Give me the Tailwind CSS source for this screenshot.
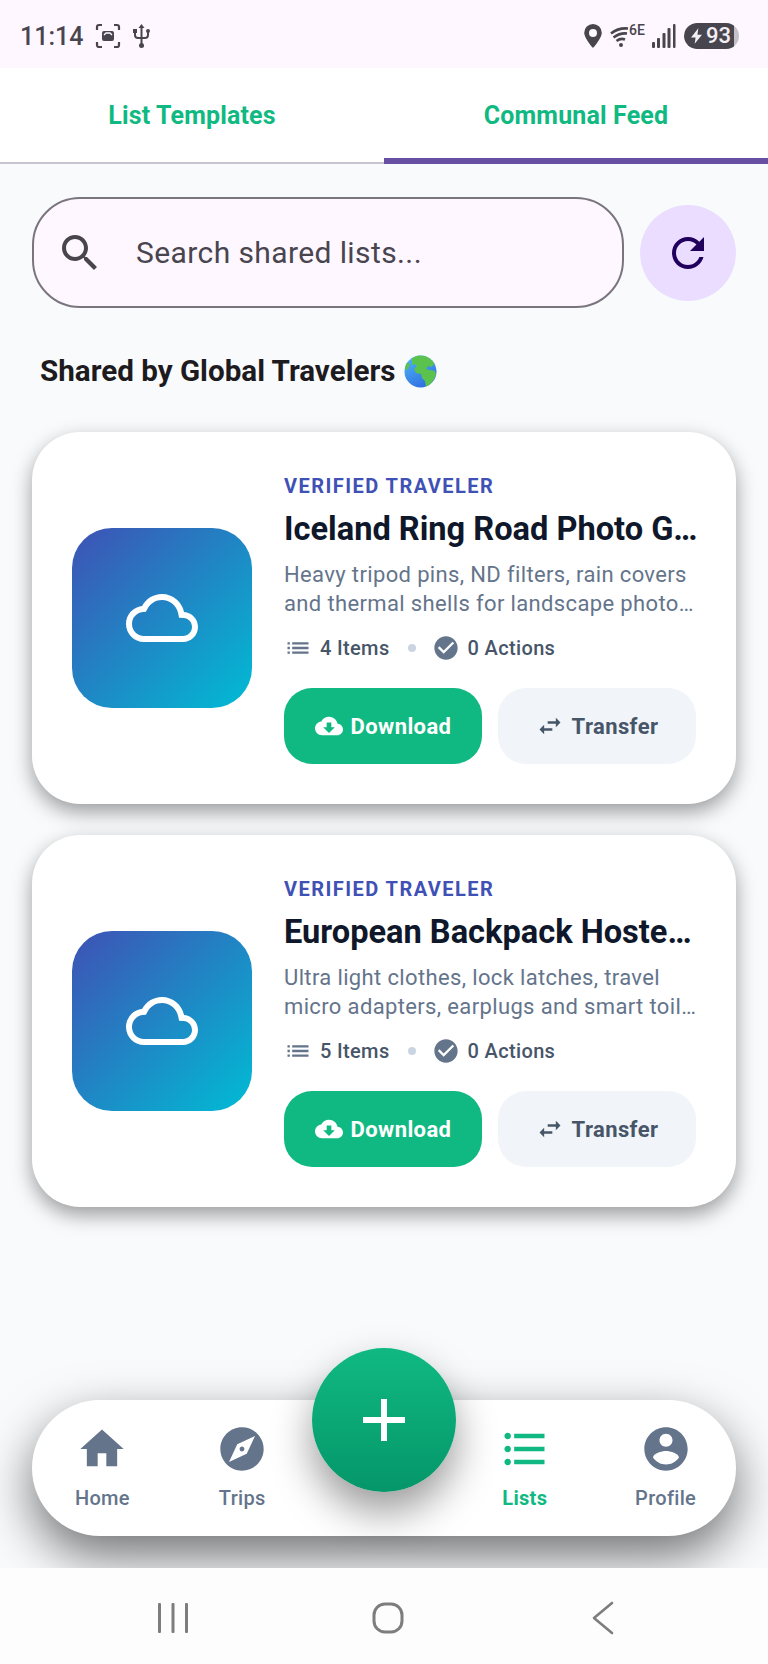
<!DOCTYPE html>
<html lang="en">
<head>
<meta charset="UTF-8">
<meta name="viewport" content="width=device-width, initial-scale=1.0">
<title>Communal Feed</title>
<script src="https://cdn.jsdelivr.net/npm/@tailwindcss/browser@4"></script>
</head>
<body class="bg-white">
<div class="w-[768px] h-[1664px] flex flex-col overflow-hidden font-['Roboto',sans-serif]">

    <!-- Status bar -->
    <div class="h-[68px] shrink-0 bg-[#fef7ff] flex items-center justify-between pl-[20px] pr-[29px] pt-[4px] text-[#49454f]">
        <div class="flex items-center">
            <span class="text-[25px] font-medium leading-none">11:14</span>
            <svg class="ml-[12px]" width="26" height="26" viewBox="0 0 26 26" fill="none" stroke="#49454f" stroke-width="2.200"><path d="M2 7V4a2 2 0 0 1 2-2h3M19 2h3a2 2 0 0 1 2 2v3M24 19v3a2 2 0 0 1-2 2h-3M7 24H4a2 2 0 0 1-2-2v-3"/><rect x="7" y="8" width="12" height="10" rx="2" fill="#49454f" stroke="none"/><path d="M9 12l2-2h4l2 2" stroke="#fef7ff" stroke-width="1.300"/></svg>
            <svg class="ml-[12px]" width="17" height="25" viewBox="0 0 17 25" fill="none" stroke="#49454f" stroke-width="2"><path d="M8.500 2v19M2 8v3c0 2 1 3 3 3h7c2 0 3-1 3-3V8"/><circle cx="8.500" cy="21.500" r="2.500" fill="#49454f" stroke="none"/><path d="M8.500 0l3 4h-6z" fill="#49454f" stroke="none"/><rect x="0" y="5" width="4" height="4" fill="#49454f" stroke="none"/><circle cx="15" cy="7" r="2" fill="#49454f" stroke="none"/></svg>
        </div>
        <div class="flex items-center">
            <svg width="18" height="24" viewBox="0 0 18 24"><path fill-rule="evenodd" fill="#49454f" d="M9 0a8.800 8.800 0 0 1 8.800 8.800C17.800 14.500 9 24 9 24S.2 14.500.2 8.800A8.800 8.800 0 0 1 9 0zm0 5a4 4 0 1 0 0 8 4 4 0 0 0 0-8z"/></svg>
            <div class="relative ml-[8px] w-[36px] h-[24px]">
                <svg width="20" height="22" viewBox="0 0 20 22" fill="none" stroke="#49454f" stroke-width="2.600" class="absolute left-0 top-[2px]"><path d="M1 7.500C6 3.500 12 2 18 2.500M3.500 11.500C8 8 12 7 17 7.500M6.500 15c2.500-2 6-2.500 8.500-1.500"/><circle cx="11" cy="19" r="2" fill="#49454f" stroke="none"/></svg>
                <span class="absolute left-[19px] top-[-1px] text-[14px] font-medium leading-none">6E</span>
            </div>
            <svg class="ml-[6px]" width="24" height="24" viewBox="0 0 24 24" fill="#49454f"><rect x="0" y="18" width="3" height="6" rx="1"/><rect x="5" y="14" width="3" height="10" rx="1"/><rect x="10.500" y="9" width="3" height="15" rx="1"/><rect x="15.500" y="4" width="3" height="20" rx="1"/><rect x="21" y="0" width="2.500" height="24" rx="1"/></svg>
            <div class="ml-[8px] h-[26px] w-[55px] rounded-full bg-[#c4c1c6] overflow-hidden">
                <div class="h-full w-[50px] rounded-l-full bg-[#49454f] flex items-center pl-[7px] text-[#f4eff4]">
                    <svg width="11" height="16" viewBox="0 0 12 17" fill="#f4eff4"><path d="M8 0L0 10h5l-1 7 8-10H7z"/></svg>
                    <span class="ml-[4px] text-[22px] font-medium leading-none">93</span>
                </div>
            </div>
        </div>
    </div>

    <!-- Tabs -->
    <div class="h-[96px] shrink-0 bg-white grid grid-cols-2 relative border-b-2 border-[#cac4d0]">
        <div class="flex items-center justify-center pt-[2px] text-[25px] tracking-[0.15px] font-bold text-[#10b981]">List Templates</div>
        <div class="flex items-center justify-center pt-[2px] text-[25px] tracking-[0.15px] font-bold text-[#10b981]">Communal Feed</div>
        <div class="absolute right-0 bottom-[-2px] w-[384px] h-[6px] bg-[#6750a4]"></div>
    </div>

    <!-- Feed -->
    <div class="flex-1 relative overflow-hidden bg-[#f8fafc] px-[32px] pt-[33px]">
        <div class="flex items-center gap-[16px]">
            <div class="flex-1 h-[111px] rounded-[48px] border-2 border-[#79747e] bg-[#fef7ff] flex items-center pl-[22px]">
                <svg width="48" height="48" viewBox="0 0 24 24" fill="#49454f"><path d="M15.500 14h-.79l-.28-.27C15.410 12.590 16 11.110 16 9.500 16 5.910 13.090 3 9.500 3S3 5.910 3 9.500 5.910 16 9.500 16c1.610 0 3.090-.59 4.230-1.570l.27.28v.79l5 4.990L20.490 19l-4.990-5zm-6 0C7.010 14 5 11.990 5 9.500S7.010 5 9.500 5 14 7.010 14 9.500 11.990 14 9.500 14z"/></svg>
                <span class="ml-[32px] text-[30px] tracking-[0.4px] text-[#49454f]">Search shared lists...</span>
            </div>
            <div class="w-[96px] h-[96px] rounded-full bg-[#eaddff] flex items-center justify-center">
                <svg width="48" height="48" viewBox="0 0 24 24" fill="#21005d"><path d="M17.650 6.350C16.200 4.900 14.210 4 12 4c-4.420 0-7.990 3.580-7.990 8s3.570 8 7.990 8c3.730 0 6.840-2.550 7.730-6h-2.080c-.82 2.330-3.040 4-5.650 4-3.310 0-6-2.690-6-6s2.690-6 6-6c1.660 0 3.140.69 4.220 1.780L13 11h7V4l-2.350 2.350z"/></svg>
            </div>
        </div>

        <div class="mt-[45px] ml-[8px] flex items-center h-[36px]">
            <span class="text-[29.6px] font-bold text-[#1d1b20]">Shared by Global Travelers</span>
            <svg class="ml-[8px]" width="33" height="33" viewBox="0 0 33 33">
                <defs>
                    <linearGradient id="sea" x1="0.2" y1="0" x2="0.7" y2="1"><stop offset="0" stop-color="#4db5f5"/><stop offset="1" stop-color="#2f6ce0"/></linearGradient>
                    <clipPath id="ball"><circle cx="16.500" cy="16.500" r="16"/></clipPath>
                </defs>
                <circle cx="16.500" cy="16.500" r="16" fill="url(#sea)"/>
                <g clip-path="url(#ball)" fill="#5cc24e">
                    <path d="M8 3l6-3 12 1 5 6-3 5-4-1-2 3 4 1 5 1 1 4-3 6-4 5-3 1-1-6-3-3-1-4-5-1-2-4 3-3-2-2-3 1z"/>
                    <path d="M0 9l4-2 2 3-3 5-3-1z"/>
                </g>
            </svg>
        </div>

        <div class="mt-[43px] flex flex-col gap-[31px]">
            <!-- Card 1 -->
            <div class="h-[372px] rounded-[48px] bg-white shadow-[0_8px_20px_rgba(0,0,0,0.38)] flex items-center pl-[40px] pr-[40px] gap-[32px]">
                <div class="w-[180px] h-[180px] shrink-0 rounded-[40px] bg-linear-to-br/srgb from-[#3f51b5] to-[#00bcd4] flex items-center justify-center">
                    <svg width="72" height="72" viewBox="0 0 24 24" fill="#fff"><path d="M19.350 10.040C18.670 6.590 15.640 4 12 4 9.110 4 6.600 5.640 5.350 8.040 2.340 8.360 0 10.910 0 14c0 3.310 2.690 6 6 6h13c2.760 0 5-2.240 5-5 0-2.640-2.050-4.780-4.650-4.960zM19 18H6c-2.210 0-4-1.790-4-4 0-2.050 1.530-3.760 3.560-3.970l1.070-.11.5-.95C8.080 7.140 9.940 6 12 6c2.620 0 4.880 1.860 5.390 4.430l.3 1.500 1.530.11c1.560.1 2.780 1.410 2.780 2.960 0 1.650-1.350 3-3 3z"/></svg>
                </div>
                <div class="flex-1 min-w-0">
                    <div class="text-[20px] leading-[28px] font-bold tracking-[1.45px] text-[#3f51b5]">VERIFIED TRAVELER</div>
                    <div class="mt-[9px] text-[32.6px] leading-[40px] font-bold text-[#0f172a] whitespace-nowrap">Iceland Ring Road Photo G…</div>
                    <div class="mt-[11px] text-[22px] leading-[29px] tracking-[0.36px] text-[#64748b] whitespace-nowrap">
                        <div>Heavy tripod pins, ND filters, rain covers</div>
                        <div>and thermal shells for landscape photo…</div>
                    </div>
                    <div class="mt-[16px] h-[28px] flex items-center text-[20px] font-medium tracking-[0.35px] text-[#475569]">
                        <svg width="28" height="28" viewBox="0 0 24 24" fill="#64748b"><path d="M3 13h2v-2H3v2zm0 4h2v-2H3v2zm0-8h2V7H3v2zm4 4h14v-2H7v2zm0 4h14v-2H7v2zM7 7v2h14V7H7z"/></svg>
                        <span class="ml-[8px]">4 Items</span>
                        <span class="ml-[18px] mr-[16px] w-[8px] h-[8px] rounded-full bg-[#cbd5e1]"></span>
                        <svg width="28" height="28" viewBox="0 0 24 24" fill="#64748b"><path d="M12 2C6.480 2 2 6.480 2 12s4.480 10 10 10 10-4.480 10-10S17.520 2 12 2zm-2 15l-5-5 1.410-1.410L10 14.170l7.590-7.590L19 8l-9 9z"/></svg>
                        <span class="ml-[8px]">0 Actions</span>
                    </div>
                    <div class="mt-[26px] grid grid-cols-2 gap-[16px]">
                        <div class="h-[76px] rounded-[28px] bg-[#10b981] text-white flex items-center justify-center gap-[8px] text-[22px] font-bold tracking-[0.4px]">
                            <svg width="28" height="28" viewBox="0 0 24 24" fill="#fff"><path d="M19.350 10.040C18.670 6.590 15.640 4 12 4 9.110 4 6.600 5.640 5.350 8.040 2.340 8.360 0 10.910 0 14c0 3.310 2.690 6 6 6h13c2.760 0 5-2.240 5-5 0-2.640-2.050-4.780-4.650-4.960zM17 13l-5 5-5-5h3V9h4v4h3z"/></svg>
                            Download
                        </div>
                        <div class="h-[76px] rounded-[28px] bg-[#f1f5f9] text-[#475569] flex items-center justify-center gap-[8px] text-[22px] font-bold tracking-[0.4px]">
                            <svg width="28" height="28" viewBox="0 0 24 24" fill="#475569"><path d="M6.990 11L3 15l3.990 4v-3H14v-2H6.990v-3zM21 9l-3.990-4v3H10v2h7.010v3L21 9z"/></svg>
                            Transfer
                        </div>
                    </div>
                </div>
            </div>

            <!-- Card 2 -->
            <div class="h-[372px] rounded-[48px] bg-white shadow-[0_8px_20px_rgba(0,0,0,0.38)] flex items-center pl-[40px] pr-[40px] gap-[32px]">
                <div class="w-[180px] h-[180px] shrink-0 rounded-[40px] bg-linear-to-br/srgb from-[#3f51b5] to-[#00bcd4] flex items-center justify-center">
                    <svg width="72" height="72" viewBox="0 0 24 24" fill="#fff"><path d="M19.350 10.040C18.670 6.590 15.640 4 12 4 9.110 4 6.600 5.640 5.350 8.040 2.340 8.360 0 10.910 0 14c0 3.310 2.690 6 6 6h13c2.760 0 5-2.240 5-5 0-2.640-2.050-4.780-4.650-4.960zM19 18H6c-2.210 0-4-1.790-4-4 0-2.050 1.530-3.760 3.560-3.970l1.070-.11.5-.95C8.080 7.140 9.940 6 12 6c2.620 0 4.880 1.860 5.390 4.430l.3 1.500 1.530.11c1.560.1 2.780 1.410 2.780 2.960 0 1.650-1.350 3-3 3z"/></svg>
                </div>
                <div class="flex-1 min-w-0">
                    <div class="text-[20px] leading-[28px] font-bold tracking-[1.45px] text-[#3f51b5]">VERIFIED TRAVELER</div>
                    <div class="mt-[9px] text-[32.6px] leading-[40px] font-bold text-[#0f172a] whitespace-nowrap">European Backpack Hoste…</div>
                    <div class="mt-[11px] text-[22px] leading-[29px] tracking-[0.36px] text-[#64748b] whitespace-nowrap">
                        <div>Ultra light clothes, lock latches, travel</div>
                        <div>micro adapters, earplugs and smart toil…</div>
                    </div>
                    <div class="mt-[16px] h-[28px] flex items-center text-[20px] font-medium tracking-[0.35px] text-[#475569]">
                        <svg width="28" height="28" viewBox="0 0 24 24" fill="#64748b"><path d="M3 13h2v-2H3v2zm0 4h2v-2H3v2zm0-8h2V7H3v2zm4 4h14v-2H7v2zm0 4h14v-2H7v2zM7 7v2h14V7H7z"/></svg>
                        <span class="ml-[8px]">5 Items</span>
                        <span class="ml-[18px] mr-[16px] w-[8px] h-[8px] rounded-full bg-[#cbd5e1]"></span>
                        <svg width="28" height="28" viewBox="0 0 24 24" fill="#64748b"><path d="M12 2C6.480 2 2 6.480 2 12s4.480 10 10 10 10-4.480 10-10S17.520 2 12 2zm-2 15l-5-5 1.410-1.410L10 14.170l7.590-7.590L19 8l-9 9z"/></svg>
                        <span class="ml-[8px]">0 Actions</span>
                    </div>
                    <div class="mt-[26px] grid grid-cols-2 gap-[16px]">
                        <div class="h-[76px] rounded-[28px] bg-[#10b981] text-white flex items-center justify-center gap-[8px] text-[22px] font-bold tracking-[0.4px]">
                            <svg width="28" height="28" viewBox="0 0 24 24" fill="#fff"><path d="M19.350 10.040C18.670 6.590 15.640 4 12 4 9.110 4 6.600 5.640 5.350 8.040 2.340 8.360 0 10.910 0 14c0 3.310 2.690 6 6 6h13c2.760 0 5-2.240 5-5 0-2.640-2.050-4.780-4.650-4.960zM17 13l-5 5-5-5h3V9h4v4h3z"/></svg>
                            Download
                        </div>
                        <div class="h-[76px] rounded-[28px] bg-[#f1f5f9] text-[#475569] flex items-center justify-center gap-[8px] text-[22px] font-bold tracking-[0.4px]">
                            <svg width="28" height="28" viewBox="0 0 24 24" fill="#475569"><path d="M6.990 11L3 15l3.990 4v-3H14v-2H6.990v-3zM21 9l-3.990-4v3H10v2h7.010v3L21 9z"/></svg>
                            Transfer
                        </div>
                    </div>
                </div>
            </div>
        </div>

        <!-- Floating bottom nav -->
        <div class="absolute left-[32px] right-[32px] bottom-[32px] h-[136px] rounded-[68px] bg-white shadow-[0_20px_50px_rgba(0,0,0,0.55)] grid grid-cols-5 text-[20px] font-medium tracking-[0.3px] text-[#64748b]">
            <div class="flex flex-col items-center pt-[23px]">
                <svg width="52" height="52" viewBox="0 0 24 24" fill="#64748b"><path d="M10 20v-6h4v6h5v-8h3L12 3 2 12h3v8z"/></svg>
                <span class="mt-[11px] leading-[24px]">Home</span>
            </div>
            <div class="flex flex-col items-center pt-[23px] pr-[2px]">
                <svg width="52" height="52" viewBox="0 0 24 24" fill="#64748b"><path d="M12 10.900c-.61 0-1.100.49-1.100 1.100s.49 1.100 1.100 1.100c.61 0 1.100-.49 1.100-1.100s-.49-1.100-1.100-1.100zM12 2C6.480 2 2 6.480 2 12s4.480 10 10 10 10-4.480 10-10S17.520 2 12 2zm2.190 12.190L6 18l3.810-8.190L18 6l-3.810 8.190z"/></svg>
                <span class="mt-[11px] leading-[24px]">Trips</span>
            </div>
            <div></div>
            <div class="flex flex-col items-center pt-[23px] text-[#10b981] font-bold">
                <svg width="52" height="52" viewBox="0 0 24 24" fill="#10b981"><path d="M4 10.500c-.83 0-1.500.67-1.500 1.500s.67 1.500 1.500 1.500 1.500-.67 1.500-1.500-.67-1.500-1.500-1.500zm0-6c-.83 0-1.500.67-1.500 1.500S3.170 7.500 4 7.500 5.500 6.830 5.500 6 4.830 4.500 4 4.500zm0 12c-.83 0-1.500.68-1.500 1.500s.68 1.500 1.500 1.500 1.500-.68 1.500-1.500-.67-1.500-1.500-1.500zM7 19h14v-2H7v2zm0-6h14v-2H7v2zm0-8v2h14V5H7z"/></svg>
                <span class="mt-[11px] leading-[24px]">Lists</span>
            </div>
            <div class="flex flex-col items-center pt-[23px]">
                <svg width="52" height="52" viewBox="0 0 24 24" fill="#64748b"><path d="M12 2C6.480 2 2 6.480 2 12s4.480 10 10 10 10-4.480 10-10S17.520 2 12 2zm0 3c1.660 0 3 1.340 3 3s-1.340 3-3 3-3-1.340-3-3 1.340-3 3-3zm0 14.200c-2.500 0-4.710-1.280-6-3.220.03-1.990 4-3.080 6-3.080 1.990 0 5.970 1.090 6 3.080-1.290 1.940-3.500 3.220-6 3.220z"/></svg>
                <span class="mt-[11px] leading-[24px]">Profile</span>
            </div>
        </div>

        <!-- Add button -->
        <div class="absolute left-[312px] bottom-[76px] w-[144px] h-[144px] rounded-full bg-linear-to-b/srgb from-[#10b981] to-[#059669] shadow-[0_20px_40px_rgba(0,0,0,0.4)] flex items-center justify-center">
            <svg width="72" height="72" viewBox="0 0 24 24" fill="#fff"><path d="M19 13h-6v6h-2v-6H5v-2h6V5h2v6h6v2z"/></svg>
        </div>
    </div>

    <!-- System navigation -->
    <div class="h-[96px] shrink-0 bg-[#fdfdfd] grid grid-cols-3 items-center justify-items-center pl-[65px] pr-[58px] pt-[4px]">
        <svg width="32" height="32" viewBox="0 0 32 32" fill="#7d7d7d"><rect x="1" y="1" width="3" height="30" rx="1"/><rect x="14.500" y="1" width="3" height="30" rx="1"/><rect x="28" y="1" width="3" height="30" rx="1"/></svg>
        <svg width="32" height="32" viewBox="0 0 32 32" fill="none" stroke="#7d7d7d" stroke-width="3"><rect x="2" y="2" width="28" height="28" rx="11"/></svg>
        <svg width="24" height="34" viewBox="0 0 24 34" fill="none" stroke="#7d7d7d" stroke-width="2.600" stroke-linecap="round" stroke-linejoin="round"><path d="M21 2L3 17l18 15"/></svg>
    </div>
</div>
</body>
</html>
